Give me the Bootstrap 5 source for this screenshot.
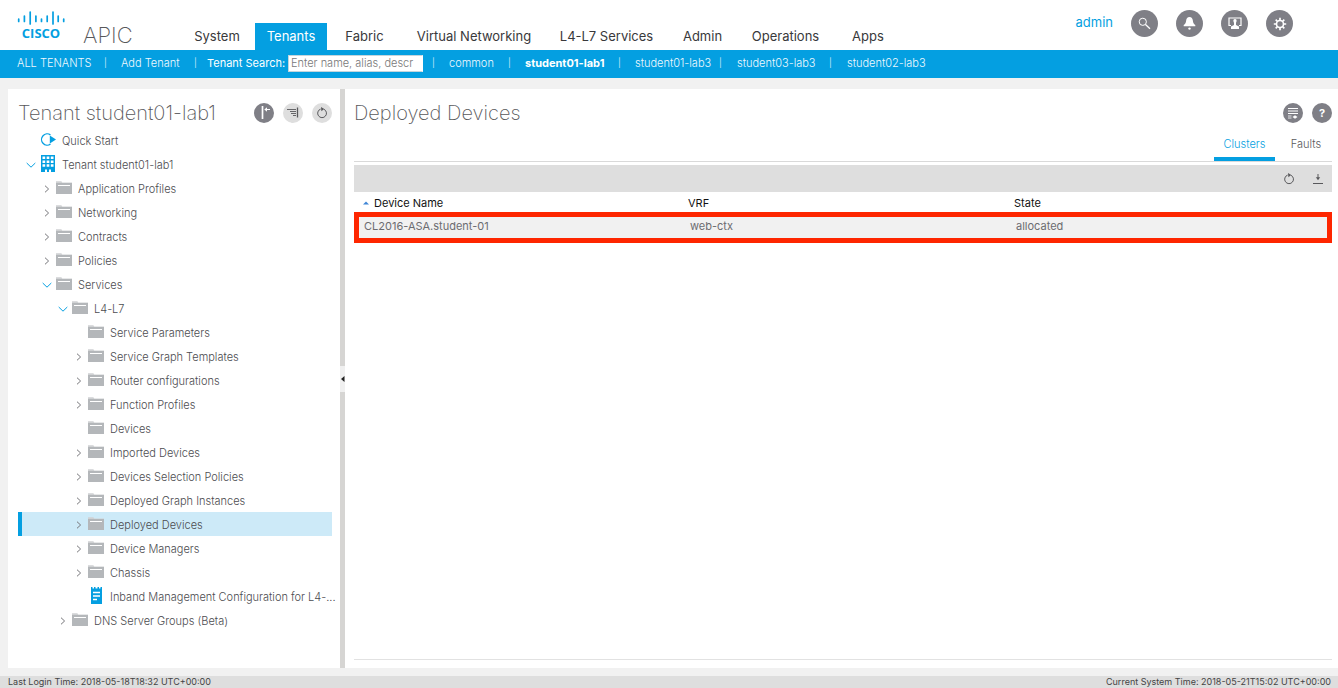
<!DOCTYPE html>
<html lang="en">
<head>
<meta charset="utf-8">
<meta name="viewport" content="width=device-width, initial-scale=1">
<title>APIC - Deployed Devices</title>
<link rel="stylesheet" href="https://cdn.jsdelivr.net/npm/bootstrap@5.3.0/dist/css/bootstrap.min.css">
<style>
  :root { --cisco: #049fe1; --ink: #58585b; --disc: #7f7f86; --soft: #dedede; }
  body { font-family: Inter, "Liberation Sans", sans-serif; font-size: 11px; line-height: 16px; color: var(--ink); background: #f1f1f1; }
  a { text-decoration: none; color: inherit; }
  button { border: 0; padding: 0; background: none; color: inherit; }
  svg { display: block; flex: none; }

  .top-bar { height: 50px; padding-left: 17px; padding-right: 45px; }
  .brand-box { width: 162px; }
  .brand-mark { width: 48px; padding-top: 10px; color: var(--cisco); }
  .brand-name { font: 700 13px/14px "Open Sans", sans-serif; }
  .product { font-size: 22px; line-height: 28px; font-weight: 200; padding: 21px 0 0 18px; }
  .main-nav { display: grid; grid-template-columns: 76px 72px 75px 144px 121px 71px 95px 70px; padding-top: 23px; }
  .main-nav a { height: 27px; line-height: 27px; font-size: 13px; text-align: center; color: #39393b; }
  .main-nav a.active { background: var(--cisco); color: #fff; }
  .user-link { font-size: 13px; color: var(--cisco); }
  .disc { width: 27px; height: 27px; border-radius: 50%; background: var(--disc); color: #fff; display: flex; align-items: center; justify-content: center; }
  .disc-sm { width: 20px; height: 20px; }
  .disc-soft { background: var(--soft); color: var(--ink); }
  .tools { gap: 18px; padding-top: 10px; }

  .tenant-bar { display: grid; grid-template-columns: 87px 17px 73px 13px 81px 144px 17px 59px 17px 93px 17px 84px 18px 92px 18px auto;
    height: 28px; padding: 0 0 2px 17px; background: var(--cisco); color: #f0f9fe; font-weight: 300; align-items: center; white-space: nowrap; }
  .tenant-bar label { font-weight: 400; }
  .tenant-bar span { font-size: 9px; }
  .tenant-bar input { width: 135px; height: 17px; border: 1px solid #c4d5dc; border-right-color: #fff; padding: 0 2px; font-size: 11px; font-weight: 300; background: #fff; border-radius: 0; }
  .tenant-bar input::placeholder { color: #777; }

  .work { padding: 11px 0 8px 8px; min-height: 0; }
  .side { width: 332px; padding: 0 8px 0 10px; background: #fff; flex: none; }
  .pane-head { height: 39px; padding-top: 9px; }
  .pane-title { font-size: 20px; line-height: 30px; font-weight: 200; margin: 0; white-space: nowrap; }
  .pane-tools { gap: 9px; padding-top: 5px; }
  .divider { width: 5px; background: #d6d5d3; flex: none; display: flex; align-items: center; }
  .divider button { width: 5px; height: 26px; background: #f0f0f0; color: #222; }
  .content-pane { background: #fff; padding: 0 6px 8px 9px; min-width: 0; }

  .tree li { display: flex; height: 24px; border-left: 4px solid transparent; padding-left: 2px; color: #4c4c50; font-weight: 300; }
  .tree li.sel { background: #cdeaf8; border-left-color: var(--cisco); }
  .tree .lv1 { padding-left: 18px; }
  .tree .lv2 { padding-left: 34px; }
  .tree .lv3 { padding-left: 50px; }
  .tree a { line-height: 26px; white-space: nowrap; margin-left: 6px; }
  .tw { width: 16px; height: 26px; flex: none; display: flex; align-items: center; justify-content: center; padding-right: 2px; }
  .tree .ic { margin-top: 2px; }

  .view-tabs { height: 34px; border-bottom: 1px solid #d9d9d9; }
  .view-tabs a { width: 61px; height: 33px; line-height: 33px; text-align: center; border-bottom: 4px solid transparent; font-weight: 300; }
  .view-tabs a:last-child { width: 57px; padding-left: 5px; }
  .view-tabs a.active { color: var(--cisco); border-bottom-color: var(--cisco); }
  .action-bar { height: 27px; margin-top: 3px; padding-right: 8px; gap: 17px; background: var(--soft); }
  .devices { width: 100%; table-layout: fixed; border-collapse: collapse; }
  .devices th { height: 20px; padding: 1px 8px 0; font-weight: 400; color: #111; }
  .devices td { height: 31px; padding: 0 10px 3px; background: #f1f1f1; color: #6c6c70; }
  .devices tbody tr { outline: 5px solid #fe2600; outline-offset: -5px; }
  .sheet { border-bottom: 1px solid #e2e2e2; }
  .status { height: 12px; line-height: 12px; font-size: 9px; padding: 0 7px 0 8px; background: #dedede; color: #444; }
</style>
</head>
<body class="d-flex flex-column vh-100 overflow-hidden">

<svg width="0" height="0" class="position-absolute" aria-hidden="true">
  <symbol id="folder" viewBox="0 0 16 18"><path d="M0 3.300h5.300l1 1.200H16V6H0z" fill="#cfd1d3"/><path d="M0 5h16v11H0z" fill="#b4b7ba"/><path d="M2 7.500h12" stroke="#fff"/></symbol>
  <symbol id="closed" viewBox="0 0 8 8"><path d="M2 .7 5.600 4 2 7.300" fill="none" stroke="#77777b"/></symbol>
  <symbol id="opened" viewBox="0 0 10 8"><path d="M.7 2 5 6.200 9.300 2" fill="none" stroke="#049fe1"/></symbol>
  <symbol id="reload" viewBox="0 0 12 12"><path d="M4.600 2.100a4.400 4.400 0 1 0 3.200.1" fill="none" stroke="currentColor"/><path d="M5 .1 8.200 2 5.400 4.200z" fill="currentColor"/></symbol>
</svg>

<header class="top-bar bg-white d-flex">
  <a href="#" class="brand-box d-flex">
    <span class="brand-mark d-flex flex-column align-items-center">
      <svg width="48" height="16" viewBox="0 0 48 16" fill="none" stroke="currentColor" stroke-width="1.700" stroke-linecap="round"><path d="M1.700 9v2.400M7.400 6v5.400M13.200 2v12M18.900 6v5.400M24.500 9v2.400M30.200 6v5.400M36 2v12M41.200 6v5.400M46.700 9v2.400"/></svg>
      <span class="brand-name">CISCO</span>
    </span>
    <span class="product">APIC</span>
  </a>
  <nav class="main-nav">
    <a href="#">System</a><a href="#" class="active">Tenants</a><a href="#">Fabric</a><a href="#">Virtual Networking</a><a href="#">L4-L7 Services</a><a href="#">Admin</a><a href="#">Operations</a><a href="#">Apps</a>
  </nav>
  <div class="tools d-flex align-items-start ms-auto">
    <a href="#" class="user-link pt-1">admin</a>
    <button class="disc" aria-label="Search"><svg width="13" height="13" viewBox="0 0 13 13" fill="none" stroke="currentColor"><circle cx="4.800" cy="4.800" r="3.600"/><path d="m7.500 7.500 4.500 4.300" stroke-width="1.300"/></svg></button>
    <button class="disc" aria-label="Alerts"><svg width="13" height="13" viewBox="0 0 13 13" fill="currentColor"><path d="M6.500 0C4.300 0 3.500 1.500 3.200 3.300 2.900 6 2.300 7.300.700 8v1.200h11.600V8C10.700 7.300 10.100 6 9.800 3.300 9.500 1.500 8.700 0 6.500 0z"/><circle cx="6.500" cy="11.600" r="1.200"/></svg></button>
    <button class="disc" aria-label="Sessions"><svg width="14" height="13" viewBox="0 0 14 13"><path d="M3 8.500H1V1h12v7.500h-2" fill="none" stroke="currentColor" stroke-width="1.200"/><path d="M7 2c-1.200 0-1.700.900-1.600 2 .1.900.4 1.400.6 1.700V8L3 9.500V12h8V9.500L8 8V5.700c.2-.3.500-.8.600-1.700C8.700 2.900 8.200 2 7 2z" fill="currentColor"/></svg></button>
    <button class="disc" aria-label="Settings"><svg width="14" height="14" viewBox="0 0 14 14" fill="none" stroke="currentColor"><circle cx="7" cy="7" r="3.500" stroke-width="1.600"/><path d="M7 3.500V.8M7 10.500v2.700M3.500 7H.8M10.500 7h2.700M4.500 4.500 2.700 2.700M9.500 9.500l1.800 1.800M4.500 9.500l-1.800 1.800M9.500 4.500l1.800-1.800" stroke-width="1.700"/></svg></button>
  </div>
</header>

<nav class="tenant-bar">
  <a href="#">ALL TENANTS</a><span>|</span><a href="#">Add Tenant</a><span>|</span>
  <label for="tenantSearch" class="text-white">Tenant Search:</label>
  <input id="tenantSearch" type="text" placeholder="Enter name, alias, descr">
  <span>|</span><a href="#">common</a><span>|</span><a href="#" class="fw-bold text-white">student01-lab1</a><span>|</span><a href="#">student01-lab3</a><span>|</span><a href="#">student03-lab3</a><span>|</span><a href="#">student02-lab3</a>
</nav>

<main class="work d-flex flex-fill">
  <aside class="side">
    <div class="pane-head d-flex justify-content-between">
      <h1 class="pane-title">Tenant student01-lab1</h1>
      <div class="pane-tools d-flex">
        <button class="disc disc-sm" aria-label="Collapse panel"><svg width="14" height="14" viewBox="0 0 14 14" fill="none" stroke="currentColor"><path d="M5.500 0v13" stroke-width="1.700"/><path d="M13 3.500H8"/><path d="M7.300 3.500 10 1.300v4.400z" fill="currentColor" stroke="none"/></svg></button>
        <button class="disc disc-sm disc-soft" aria-label="Sort"><svg width="12" height="12" viewBox="0 0 12 12" fill="none" stroke="currentColor"><path d="M0 2.500h9M3 4.500h6M4 6.500h5M6 8.500h3" stroke-width=".900"/><path d="M10.500 .5v10" stroke-width="1.300"/></svg></button>
        <button class="disc disc-sm disc-soft" aria-label="Refresh tree"><svg width="12" height="12"><use href="#reload"/></svg></button>
      </div>
    </div>
    <ul class="tree list-unstyled mb-0">
      <li><span class="tw"></span><svg class="ic" width="16" height="18" viewBox="0 0 16 18"><path d="M10.500 5A5.600 5.600 0 1 0 10.500 14" fill="none" stroke="#049fe1" stroke-width="1.300"/><path d="M9.800 5.400 16 9.500l-6.200 4.100z" fill="#049fe1"/></svg><a href="#">Quick Start</a></li>
      <li><span class="tw"><svg width="10" height="8"><use href="#opened"/></svg></span><svg class="ic" width="16" height="18" viewBox="0 0 16 18"><path d="M1 1h14v17h-4v-2.500H9V18H7v-2.500H5V18H1z" fill="#049fe1"/><path d="M2.500 3.800h11M2.500 7.700h11M2.500 11.600h11" stroke="#fff" stroke-width="2.500" stroke-dasharray="2.700 1.450"/></svg><a href="#">Tenant student01-lab1</a></li>
      <li class="lv1"><span class="tw"><svg width="8" height="8"><use href="#closed"/></svg></span><svg class="ic" width="16" height="18"><use href="#folder"/></svg><a href="#">Application Profiles</a></li>
      <li class="lv1"><span class="tw"><svg width="8" height="8"><use href="#closed"/></svg></span><svg class="ic" width="16" height="18"><use href="#folder"/></svg><a href="#">Networking</a></li>
      <li class="lv1"><span class="tw"><svg width="8" height="8"><use href="#closed"/></svg></span><svg class="ic" width="16" height="18"><use href="#folder"/></svg><a href="#">Contracts</a></li>
      <li class="lv1"><span class="tw"><svg width="8" height="8"><use href="#closed"/></svg></span><svg class="ic" width="16" height="18"><use href="#folder"/></svg><a href="#">Policies</a></li>
      <li class="lv1"><span class="tw"><svg width="10" height="8"><use href="#opened"/></svg></span><svg class="ic" width="16" height="18"><use href="#folder"/></svg><a href="#">Services</a></li>
      <li class="lv2"><span class="tw"><svg width="10" height="8"><use href="#opened"/></svg></span><svg class="ic" width="16" height="18"><use href="#folder"/></svg><a href="#">L4-L7</a></li>
      <li class="lv3"><span class="tw"></span><svg class="ic" width="16" height="18"><use href="#folder"/></svg><a href="#">Service Parameters</a></li>
      <li class="lv3"><span class="tw"><svg width="8" height="8"><use href="#closed"/></svg></span><svg class="ic" width="16" height="18"><use href="#folder"/></svg><a href="#">Service Graph Templates</a></li>
      <li class="lv3"><span class="tw"><svg width="8" height="8"><use href="#closed"/></svg></span><svg class="ic" width="16" height="18"><use href="#folder"/></svg><a href="#">Router configurations</a></li>
      <li class="lv3"><span class="tw"><svg width="8" height="8"><use href="#closed"/></svg></span><svg class="ic" width="16" height="18"><use href="#folder"/></svg><a href="#">Function Profiles</a></li>
      <li class="lv3"><span class="tw"></span><svg class="ic" width="16" height="18"><use href="#folder"/></svg><a href="#">Devices</a></li>
      <li class="lv3"><span class="tw"><svg width="8" height="8"><use href="#closed"/></svg></span><svg class="ic" width="16" height="18"><use href="#folder"/></svg><a href="#">Imported Devices</a></li>
      <li class="lv3"><span class="tw"><svg width="8" height="8"><use href="#closed"/></svg></span><svg class="ic" width="16" height="18"><use href="#folder"/></svg><a href="#">Devices Selection Policies</a></li>
      <li class="lv3"><span class="tw"><svg width="8" height="8"><use href="#closed"/></svg></span><svg class="ic" width="16" height="18"><use href="#folder"/></svg><a href="#">Deployed Graph Instances</a></li>
      <li class="lv3 sel"><span class="tw"><svg width="8" height="8"><use href="#closed"/></svg></span><svg class="ic" width="16" height="18"><use href="#folder"/></svg><a href="#">Deployed Devices</a></li>
      <li class="lv3"><span class="tw"><svg width="8" height="8"><use href="#closed"/></svg></span><svg class="ic" width="16" height="18"><use href="#folder"/></svg><a href="#">Device Managers</a></li>
      <li class="lv3"><span class="tw"><svg width="8" height="8"><use href="#closed"/></svg></span><svg class="ic" width="16" height="18"><use href="#folder"/></svg><a href="#">Chassis</a></li>
      <li class="lv3"><span class="tw"></span><svg class="ic" width="16" height="18" viewBox="0 0 16 18"><path d="M3 1h1.500v1.500H6V1h1.500v1.500h2V1H11v1.500h1.500V1H14v17H3z" fill="#049fe1"/><path d="M5 6.500h7M5 10h7M5 13.500h4" stroke="#fff" stroke-width="1.400"/></svg><a href="#">Inband Management Configuration for L4-...</a></li>
      <li class="lv2"><span class="tw"><svg width="8" height="8"><use href="#closed"/></svg></span><svg class="ic" width="16" height="18"><use href="#folder"/></svg><a href="#">DNS Server Groups (Beta)</a></li>
    </ul>
  </aside>

  <div class="divider"><button aria-label="Collapse navigation"><svg width="5" height="6" viewBox="0 0 5 6"><path d="M4.500 0v6L1 3z" fill="currentColor"/></svg></button></div>

  <section class="content-pane flex-fill d-flex flex-column">
    <div class="pane-head d-flex justify-content-between">
      <h2 class="pane-title">Deployed Devices</h2>
      <div class="pane-tools d-flex">
        <button class="disc disc-sm" aria-label="View options"><svg width="12" height="12" viewBox="0 0 12 12" stroke="currentColor" fill="none"><path d="M1 1.500h10M1 4h10M1 6.500h10" stroke-width="1"/><path d="M1 9h3.500M1 11h3.500" stroke-width=".800"/><path d="M5.500 10 8 8.200 10.500 10 8 11.800z" fill="currentColor" stroke="none"/></svg></button>
        <button class="disc disc-sm fw-bold" aria-label="Help">?</button>
      </div>
    </div>
    <nav class="view-tabs d-flex justify-content-end"><a href="#" class="active">Clusters</a><a href="#">Faults</a></nav>
    <div class="action-bar d-flex align-items-center justify-content-end">
      <button aria-label="Refresh"><svg width="12" height="12"><use href="#reload"/></svg></button>
      <button aria-label="Download"><svg width="12" height="12" viewBox="0 0 12 12" stroke="currentColor" fill="none"><path d="M1 10.500h10M6 1v4"/><path d="M3.800 4.200h4.400L6 7.200z" fill="currentColor" stroke="none"/></svg></button>
    </div>
    <div class="sheet flex-fill">
      <table class="devices">
        <thead><tr><th><span class="d-flex align-items-center gap-1"><svg width="8" height="4" viewBox="0 0 8 4"><path d="M1 3.500 4 .5l3 3z" fill="#3f86d6"/></svg>Device Name</span></th><th>VRF</th><th>State</th></tr></thead>
        <tbody><tr><td>CL2016-ASA.student-01</td><td>web-ctx</td><td>allocated</td></tr></tbody>
      </table>
    </div>
  </section>
</main>

<footer class="status d-flex justify-content-between"><span>Last Login Time: 2018-05-18T18:32 UTC+00:00</span><span>Current System Time: 2018-05-21T15:02 UTC+00:00</span></footer>

<script src="https://cdn.jsdelivr.net/npm/bootstrap@5.3.0/dist/js/bootstrap.bundle.min.js"></script>
</body>
</html>
